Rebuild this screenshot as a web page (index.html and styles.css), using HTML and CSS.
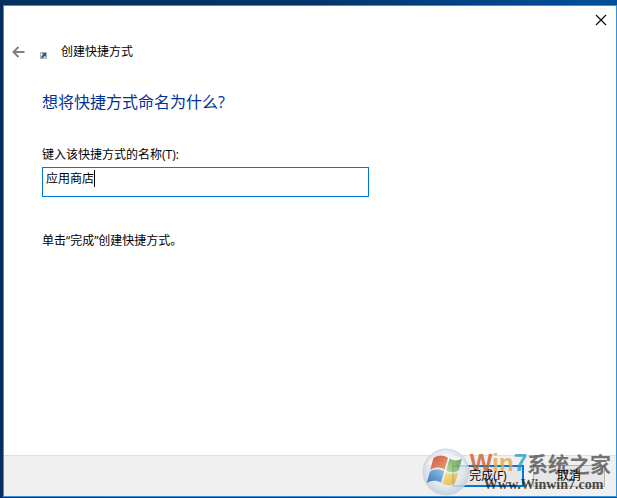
FILE: index.html
```html
<!DOCTYPE html>
<html lang="zh-CN">
<head>
    <meta charset="UTF-8">
    <meta name="viewport" content="width=device-width, initial-scale=1.0">
    <title>创建快捷方式</title>
    <link rel="stylesheet" href="styles.css">
</head>
<body>
    <form class="dialog" id="shortcutForm">
        <div class="titlebar">
            <button class="close-btn" type="button" aria-label="关闭">
                <svg width="12" height="12" viewBox="0 0 12 12"><path d="M1 1L11 11M11 1L1 11" stroke="#111" stroke-width="1.3" fill="none"/></svg>
            </button>
        </div>

        <div class="header">
            <button class="back-btn" type="button" aria-label="返回">
                <svg width="13" height="12" viewBox="0 0 13 12"><path d="M6.5 1L1.5 6L6.5 11M1.5 6H12.5" stroke="#808080" stroke-width="2" fill="none"/></svg>
            </button>
            <svg class="shortcut-icon" width="7" height="7" viewBox="0 0 7 7">
                <rect x="0.5" y="0.5" width="6" height="6" fill="#dfe8f2" stroke="#b4b4b4"/>
                <path d="M2 1H6V5L4.8 4C3.8 4.5 3.4 5.1 3.2 6H1.2C1.3 4.4 2 3.3 3.2 2.4Z" fill="#1c58b0"/>
            </svg>
            <span class="wizard-name">创建快捷方式</span>
        </div>

        <div class="content">
            <h1>想将快捷方式命名为什么?</h1>
            <label for="shortcutName">键入该快捷方式的名称(T):</label>
            <div class="name-field">
                <input type="text" id="shortcutName" name="name" value="应用商店" accesskey="t" autocomplete="off" spellcheck="false">
                <span class="caret"></span>
            </div>
            <p>单击“完成”创建快捷方式。</p>
        </div>

        <div class="footer">
            <button class="btn btn-default" type="submit"><span>完成(F)</span></button>
            <button class="btn" type="button"><span>取消</span></button>

            <div class="watermark">
                <svg class="orb" width="48" height="48" viewBox="0 0 48 48">
                    <defs>
                        <radialGradient id="orbFill" cx="50%" cy="45%" r="52%">
                            <stop offset="0" stop-color="#f2f8fc"/>
                            <stop offset="0.7" stop-color="#e3eaf1"/>
                            <stop offset="1" stop-color="#c6d1dd"/>
                        </radialGradient>
                        <linearGradient id="red" x1="0" y1="0" x2="1" y2="1">
                            <stop offset="0" stop-color="#c8452f"/>
                            <stop offset="1" stop-color="#ee9060"/>
                        </linearGradient>
                        <linearGradient id="green" x1="0" y1="1" x2="1" y2="0">
                            <stop offset="0" stop-color="#b9d693"/>
                            <stop offset="1" stop-color="#4d9a45"/>
                        </linearGradient>
                        <linearGradient id="blue" x1="0" y1="1" x2="1" y2="0">
                            <stop offset="0" stop-color="#2467ac"/>
                            <stop offset="1" stop-color="#88bfe6"/>
                        </linearGradient>
                        <linearGradient id="yellow" x1="0" y1="0" x2="1" y2="1">
                            <stop offset="0" stop-color="#f7e38a"/>
                            <stop offset="1" stop-color="#e3ab32"/>
                        </linearGradient>
                    </defs>
                    <circle cx="24" cy="24" r="23" fill="url(#orbFill)" stroke="#c9d1db" stroke-width="1" opacity="0.94"/>
                    <path d="M4 18C9 3 38 2 44 18C33 12 16 13 4 18Z" fill="#fff" opacity="0.5"/>
                    <path d="M11.5 10C16 6.5 21 6.7 26 9.7L22.7 21.5C18 18.8 13 18.8 8.2 22Z" fill="url(#red)"/>
                    <path d="M27.5 10.5C31.5 13 35.5 13.2 40 10.8L36.7 22.5C32.5 25 28 25 24.2 22.4Z" fill="url(#green)"/>
                    <path d="M7.8 23.8C12.5 20.6 17.5 20.7 22.2 23.2L19 34.4C14 32 9.4 32 4.8 35Z" fill="url(#blue)"/>
                    <path d="M23.8 24C28 26.5 32 26.7 36.2 24.3L33 35.5C28.5 38 24.5 37.8 20.4 35.2Z" fill="url(#yellow)"/>
                </svg>
                <div class="mark-text">
                    <div class="mark-name"><span class="mark-latin"><span class="w">W</span><span class="in">in</span><span class="seven">7</span></span>系统之家</div>
                    <div class="mark-url">Www.Winwin7.com</div>
                </div>
            </div>
        </div>
    </form>
</body>
</html>
```
FILE: styles.css
```css
* {
    box-sizing: border-box;
}

body {
    margin: 0;
    min-height: 100vh;
    padding: 5px 0 1px 3px;
    display: flex;
    background: linear-gradient(90deg, #03305e 0%, #02356b 50%, #01509b 100%);
    font-family: "Open Sans", "Noto Sans CJK SC", sans-serif;
    font-size: 12px;
    line-height: 16px;
    color: #000;
}

button,
input {
    font: inherit;
    color: inherit;
}

.dialog {
    flex: 1;
    display: flex;
    flex-direction: column;
    background-color: #fff;
    border: 1px solid #2e96e0;
}

.titlebar {
    display: flex;
    justify-content: flex-end;
    height: 28px;
    padding: 0 9px;
}

.close-btn,
.back-btn {
    display: flex;
    align-items: center;
    padding: 0;
    border: none;
    background: none;
}

.header {
    display: flex;
    align-items: center;
    height: 35px;
    padding-left: 8px;
}

.shortcut-icon {
    margin: 8px 14px 0 15px;
}

.content {
    flex: 1;
    padding: 23px 38px 0;
}

h1 {
    margin: 0 0 35px;
    font-size: 16px;
    line-height: 20px;
    font-weight: normal;
    color: #003399;
}

label {
    display: block;
}

.name-field {
    position: relative;
    max-width: 327px;
    margin: 4px 0 36px;
}

.name-field input {
    display: block;
    width: 100%;
    height: 30px;
    padding: 0 3px 8px;
    border: 1px solid #0078d7;
    background-color: #fff;
    outline: none;
}

.caret {
    position: absolute;
    top: 3px;
    left: 52px;
    width: 1px;
    height: 17px;
    background-color: #000;
}

p {
    margin: 0;
}

.footer {
    position: relative;
    display: flex;
    justify-content: flex-end;
    gap: 9px;
    padding: 9px 11px;
    border-top: 1px solid #dfdfdf;
    background-color: #f0f0f0;
}

.btn {
    width: 72px;
    height: 22px;
    padding: 0;
    border: 1px solid #b4b4b4;
    background-color: #e6e6e6;
    line-height: 16px;
}

.btn span {
    position: relative;
    z-index: 2;
}

.btn-default {
    border: 2px solid #0078d7;
}

/* site mark lies over the footer buttons, under their captions */
.watermark {
    position: absolute;
    z-index: 1;
    right: 5px;
    bottom: 0;
    display: flex;
    align-items: center;
    pointer-events: none;
}

.orb {
    opacity: 0.88;
}

.mark-text {
    font-weight: bold;
    white-space: nowrap;
    opacity: 0.8;
}

.mark-name {
    display: flex;
    align-items: center;
    height: 24px;
    font-family: "Noto Sans CJK SC", sans-serif;
    font-size: 21px;
    color: #555;
}

.mark-latin {
    font-family: "Liberation Sans", sans-serif;
    font-size: 24px;
}

.w {
    color: #c9602f;
}

.in {
    color: #e3a94c;
}

.seven {
    color: #2a9fc9;
}

.mark-url {
    padding: 2px 0 0 14px;
    font-family: "Liberation Serif", serif;
    font-size: 14px;
    color: #222;
}
```
